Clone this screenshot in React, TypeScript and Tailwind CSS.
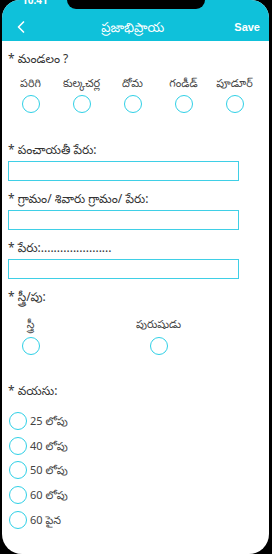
import { ChevronLeft } from "lucide-react";

const mandals = ["పరిగి", "కుల్కచర్ల", "దోమ", "గండీడ్", "పూడూర్"];
const ages = ["25 లోపు", "40 లోపు", "50 లోపు", "60 లోపు", "60 పైన"];

function Radio() {
  return <div className="h-[18px] w-[18px] rounded-full border-[1.5px] border-[#2fd0e6] bg-white" />;
}

function Label({ children }: { children: React.ReactNode }) {
  return <div className="text-[12px] leading-[16px] text-[#333]">{children}</div>;
}

function Field() {
  return <div className="mt-[3px] h-[20px] w-[231px] border border-[#3fcfe6]" />;
}

export default function App() {
  return (
    <div
      className="relative h-[554px] w-[272px] overflow-hidden bg-black"
      style={{ fontFamily: '"Noto Sans", "Noto Sans Telugu", sans-serif' }}
    >
      <div className="ml-[2px] mr-[3px] h-full overflow-hidden rounded-t-[18px] rounded-b-[20px] bg-white">
        <div className="relative flex h-[41px] items-center bg-[#0fc1da] px-[8px] pt-[13px] text-white">
          <ChevronLeft size={20} strokeWidth={2} className="ml-[1px]" />
          <div className="flex-1 text-center text-[13px] leading-none">ప్రజాభిప్రాయ</div>
          <div className="mr-[1px] text-[11px] font-bold leading-none" style={{ fontFamily: '"Liberation Sans", Arial, sans-serif' }}>
            Save
          </div>
        </div>

        <div className="px-[6px] pt-[10px]">
          <Label>* మండలం ?</Label>
          <div className="-ml-[3px] mt-[8px] flex">
            {mandals.map((m) => (
              <div key={m} className="flex w-[51px] flex-col items-center">
                <div className="text-[11px] leading-[16px] text-[#444]">{m}</div>
                <div className="mt-[4px]">
                  <Radio />
                </div>
              </div>
            ))}
          </div>

          <div className="mt-[29px]">
            <Label>* పంచాయతీ పేరు:</Label>
            <Field />
          </div>
          <div className="mt-[10px]">
            <Label>* గ్రామం/ శివారు గ్రామం/ పేరు:</Label>
            <Field />
          </div>
          <div className="mt-[10px]">
            <Label>* పేరు:......................</Label>
            <Field />
          </div>

          <div className="mt-[10px]">
            <Label>* స్త్రీ/పు:</Label>
            <div className="-ml-[3px] mt-[11px] flex">
              <div className="flex w-[51px] flex-col items-center">
                <div className="text-[11px] leading-[16px] text-[#444]">స్త్రీ</div>
                <div className="mt-[5px]">
                  <Radio />
                </div>
              </div>
              <div className="ml-[77px] flex w-[51px] flex-col items-center">
                <div className="text-[11px] leading-[16px] text-[#444]">పురుషుడు</div>
                <div className="mt-[5px]">
                  <Radio />
                </div>
              </div>
            </div>
          </div>

          <div className="mt-[28px]">
            <Label>* వయసు:</Label>
            <div className="mt-[13px] flex flex-col gap-[6.7px] pl-[1px]">
              {ages.map((a) => (
                <div key={a} className="flex items-center gap-[3px]">
                  <Radio />
                  <div className="text-[11px] leading-[16px] text-[#444]">{a}</div>
                </div>
              ))}
            </div>
          </div>
        </div>
      </div>

      <div className="absolute left-[67px] top-0 h-[9px] w-[138px] rounded-b-[10px] bg-black" />
      <div className="absolute left-[22px] top-[-7px] text-[10px] font-bold text-white">10:41</div>
    </div>
  );
}
